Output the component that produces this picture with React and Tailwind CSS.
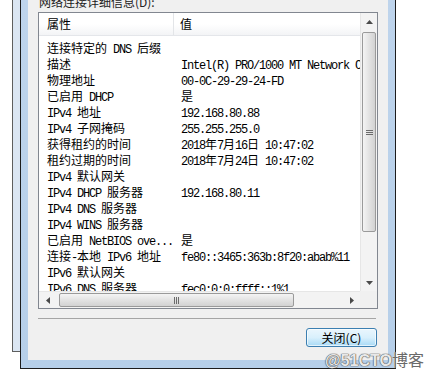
import React from "react";

const CJK = /([\u2E80-\u9FFF\uFF00-\uFFEF\u3000-\u303F]+)/;

function Mixed({ text }) {
  if (!text) return null;
  const parts = text.split(CJK).filter(Boolean);
  return parts.map((p, i) =>
    CJK.test(p) ? (
      <span key={i} className="inline-block h-[16px] font-['Noto_Sans_CJK_SC',sans-serif] text-[12px] leading-[16px]">
        {p}
      </span>
    ) : (
      <span key={i} className="inline-block h-[16px] font-['Liberation_Mono',monospace] text-[12px] leading-[16px] tracking-[-1.2px] text-black">
        {p}
      </span>
    )
  );
}

const rows = [
  ["连接特定的 DNS 后缀", ""],
  ["描述", "Intel(R) PRO/1000 MT Network Connection"],
  ["物理地址", "00-0C-29-29-24-FD"],
  ["已启用 DHCP", "是"],
  ["IPv4 地址", "192.168.80.88"],
  ["IPv4 子网掩码", "255.255.255.0"],
  ["获得租约的时间", "2018年7月16日 10:47:02"],
  ["租约过期的时间", "2018年7月24日 10:47:02"],
  ["IPv4 默认网关", ""],
  ["IPv4 DHCP 服务器", "192.168.80.11"],
  ["IPv4 DNS 服务器", ""],
  ["IPv4 WINS 服务器", ""],
  ["已启用 NetBIOS ove...", "是"],
  ["连接-本地 IPv6 地址", "fe80::3465:363b:8f20:abab%11"],
  ["IPv6 默认网关", ""],
  ["IPv6 DNS 服务器", "fec0:0:0:ffff::1%1"],
];

function TriUp() {
  return (
    <svg width="7" height="4" viewBox="0 0 7 4">
      <path d="M3.5 0 L7 4 L0 4Z" fill="#4a4a4a" />
    </svg>
  );
}
function TriDown() {
  return (
    <svg width="7" height="4" viewBox="0 0 7 4">
      <path d="M0 0 L7 0 L3.5 4Z" fill="#4a4a4a" />
    </svg>
  );
}
function TriLeft() {
  return (
    <svg width="4" height="7" viewBox="0 0 4 7">
      <path d="M4 0 L4 7 L0 3.5Z" fill="#4a4a4a" />
    </svg>
  );
}
function TriRight() {
  return (
    <svg width="4" height="7" viewBox="0 0 4 7">
      <path d="M0 0 L4 3.5 L0 7Z" fill="#4a4a4a" />
    </svg>
  );
}

export default function App() {
  return (
    <div className="relative w-[435px] h-[379px] bg-white overflow-hidden flex font-['Noto_Sans_CJK_SC',sans-serif]">
      <div className="w-[12px] shrink-0" />
      {/* back window strip */}
      <div className="w-[8px] h-[352px] shrink-0 bg-[#dbe6f3] border-l border-b border-[#5e5e5e]" />
      {/* front window */}
      <div className="w-[376px] h-[369px] shrink-0 bg-gradient-to-b from-[#bed4ec] to-[#b6cfe9] border-l border-r border-b border-[#1c1c1c] px-[7px] pb-[8px]">
        <div className="w-[360px] h-[360px] bg-[#f0f0f0] flex flex-col pl-[10px]">
          {/* label */}
          <div className="-mt-[6px] h-[18px] pl-[1px] leading-[16px] text-[12px] text-[#222] whitespace-pre">
            网络连接详细信息(D):
          </div>
          {/* list view */}
          <div className="w-[340px] h-[297px] border border-[#828790] bg-white grid grid-cols-[321px_17px] grid-rows-[278px_17px]">
            <div className="overflow-hidden flex flex-col">
              <div className="h-[23px] shrink-0 flex bg-gradient-to-b from-white via-white to-[#f3f4f6] border-b border-[#e4e6ea] text-[12px] leading-[22px] text-black">
                <div className="w-[135px] shrink-0 pl-[8px] border-r border-[#e3e5e8]">属性</div>
                <div className="pl-[6px]">值</div>
              </div>
              <div className="pt-[2px] flex flex-col">
                {rows.map(([k, v], i) => (
                  <div key={i} className="flex h-[16px] shrink-0 leading-[16px] whitespace-pre text-black">
                    <div className="w-[136px] shrink-0 pl-[8px]">
                      <Mixed text={k} />
                    </div>
                    <div className="pl-[6px] shrink-0">
                      <Mixed text={v} />
                    </div>
                  </div>
                ))}
              </div>
            </div>
            {/* vertical scrollbar */}
            <div className="bg-[#f3f3f3] border-l border-[#e6e6e6] flex flex-col">
              <div className="h-[17px] shrink-0 flex items-center justify-center">
                <TriUp />
              </div>
              <div className="h-[2px] shrink-0" />
              <div className="h-[200px] shrink-0 mx-[1px] rounded-[2px] border border-[#9a9a9a] bg-gradient-to-r from-[#f4f4f4] to-[#d2d2d2] flex items-center justify-center">
                <svg width="7" height="7" viewBox="0 0 7 7">
                  <path d="M0 1.5H7M0 3.5H7M0 5.5H7" stroke="#6b6b6b" strokeWidth="1" />
                </svg>
              </div>
              <div className="flex-1" />
              <div className="h-[17px] shrink-0 flex items-center justify-center">
                <TriDown />
              </div>
            </div>
            {/* horizontal scrollbar */}
            <div className="bg-[#f3f3f3] border-t border-[#e6e6e6] flex">
              <div className="w-[17px] shrink-0 flex items-center justify-center">
                <TriLeft />
              </div>
              <div className="w-[3px] shrink-0" />
              <div className="w-[235px] shrink-0 my-[1px] rounded-[2px] border border-[#9a9a9a] bg-gradient-to-b from-[#f4f4f4] to-[#d2d2d2] flex items-center justify-center">
                <svg width="7" height="7" viewBox="0 0 7 7">
                  <path d="M1.5 0V7M3.5 0V7M5.5 0V7" stroke="#6b6b6b" strokeWidth="1" />
                </svg>
              </div>
              <div className="flex-1" />
              <div className="w-[17px] shrink-0 flex items-center justify-center">
                <TriRight />
              </div>
            </div>
            <div className="bg-[#f0f0f0]" />
          </div>
          {/* separator */}
          <div className="mt-[9px] h-px w-[338px] bg-[#a5a5a5]" />
          {/* button */}
          <div className="mt-[9px] ml-[268px] w-[71px] h-[19px] rounded-[3px] border border-[#3c7fb1] bg-gradient-to-b from-[#eaf6fd] via-[#d9f0fc] to-[#a7d9f5] shadow-[inset_0_0_0_1px_#ffffffaa] flex items-center justify-center text-[12px] leading-[17px] text-black whitespace-pre">
            关闭(C)
          </div>
        </div>
      </div>
      {/* watermark */}
      <div className="absolute left-[325px] top-[350px] flex items-baseline whitespace-pre leading-[18px]">
        <span className="font-['Liberation_Sans',sans-serif] font-bold text-[16px] text-[#e8e8e8] [text-shadow:0_0_1px_#555,0_0_1px_#555,0_0_1px_#555]">
          @51CTO
        </span>
        <span className="font-['Noto_Sans_CJK_SC',sans-serif] text-[16px] text-[#6a6a6a] [text-shadow:0_0_1px_#fff]">
          博客
        </span>
      </div>
    </div>
  );
}
